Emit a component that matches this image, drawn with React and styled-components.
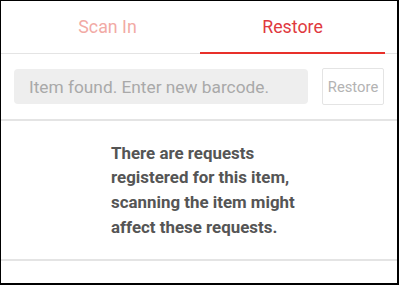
import React from 'react';
import styled, { createGlobalStyle } from 'styled-components';

const colors = {
  red: '#e8302a',
  redText: '#e0393e',
  redFaded: '#f2aaa5',
  line: '#e4e4e4',
  field: '#eeeeee',
  placeholder: '#a9a9a9',
  text: '#555555',
};

const GlobalStyle = createGlobalStyle`
  html, body {
    margin: 0;
    padding: 0;
    background: #fff;
  }
  body {
    font-family: Roboto, "Noto Sans", Arial, sans-serif;
  }
`;

const Frame = styled.div`
  box-sizing: border-box;
  width: 399px;
  height: 285px;
  border: 1px solid #000;
  border-right-width: 2px;
  border-bottom-width: 2px;
  display: flex;
  flex-direction: column;
  overflow: hidden;
`;

const TabBar = styled.div`
  display: flex;
  height: 52px;
  padding: 0 12px 0 14px;
  border-bottom: 1px solid ${colors.line};
`;

const Tab = styled.div`
  flex: 1;
  display: flex;
  align-items: center;
  justify-content: center;
  font-size: 17.8px;
  color: ${(p) => (p.$active ? colors.redText : colors.redFaded)};
  border-bottom: 2px solid ${(p) => (p.$active ? colors.red : 'transparent')};
  margin-bottom: -1px;
`;

const SearchRow = styled.div`
  display: flex;
  align-items: center;
  gap: 14px;
  height: 65px;
  padding: 0 13px;
  border-bottom: 2px solid ${colors.line};
`;

const Field = styled.div`
  flex: 1;
  height: 35px;
  display: flex;
  align-items: center;
  padding: 0 15px;
  background: ${colors.field};
  border-radius: 4px;
  font-size: 17.3px;
  color: ${colors.placeholder};
  white-space: nowrap;
`;

const Button = styled.button`
  box-sizing: border-box;
  width: 62px;
  height: 37px;
  padding: 0;
  background: #fff;
  border: 1px solid ${colors.line};
  border-radius: 2px;
  font-family: inherit;
  font-size: 14.8px;
  color: #b3b3b3;
`;

const Notice = styled.div`
  height: 138px;
  display: flex;
  align-items: center;
  padding-left: 110px;
  border-bottom: 2px solid ${colors.line};
`;

const NoticeText = styled.p`
  margin: 0;
  width: 210px;
  font-size: 16.9px;
  font-weight: 700;
  line-height: 24.7px;
  color: ${colors.text};
`;

export default function App() {
  return (
    <>
      <GlobalStyle />
      <Frame>
        <TabBar>
          <Tab>Scan In</Tab>
          <Tab $active>Restore</Tab>
        </TabBar>
        <SearchRow>
          <Field>Item found. Enter new barcode.</Field>
          <Button>Restore</Button>
        </SearchRow>
        <Notice>
          <NoticeText>
            There are requests registered for this item, scanning the item might
            affect these requests.
          </NoticeText>
        </Notice>
      </Frame>
    </>
  );
}
